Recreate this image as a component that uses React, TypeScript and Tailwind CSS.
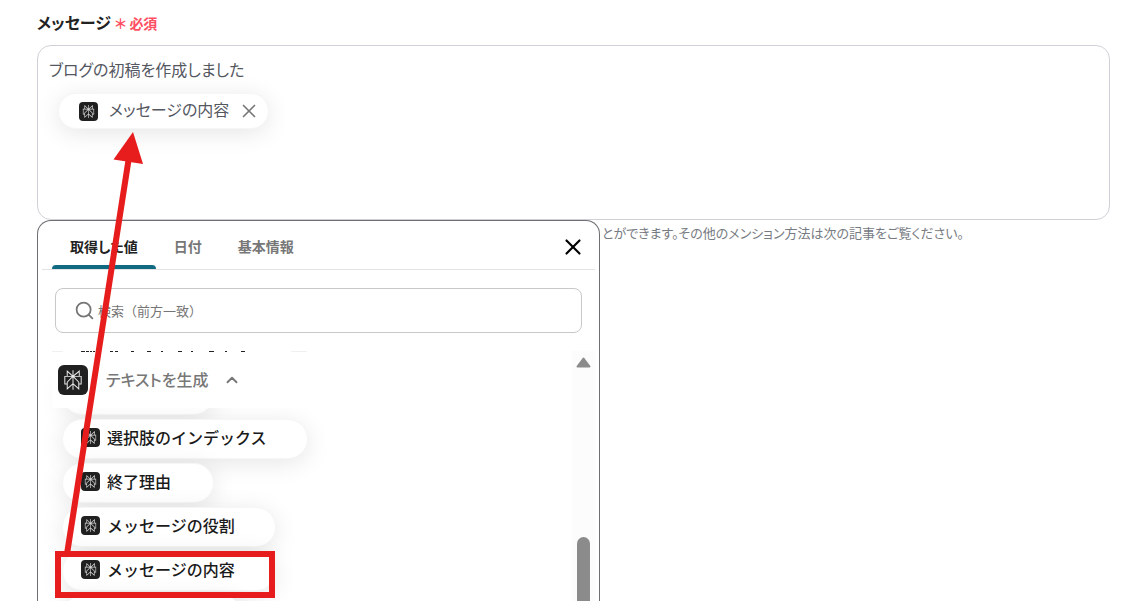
import { ChevronUp, Search, X } from "lucide-react";
import { SiPerplexity } from "react-icons/si";
import { useState } from "react";

const tabs = ["取得した値", "日付", "基本情報"];

const values = [
  { id: 1, name: "選択肢のインデックス", width: "w-[246px]" },
  { id: 2, name: "終了理由", width: "w-[152px]" },
  { id: 3, name: "メッセージの役割", width: "w-[214px]" },
  { id: 4, name: "メッセージの内容", width: "w-[214px]" },
];

const AppIcon = ({ large }: { large?: boolean }) => (
  <span
    className={
      large
        ? "flex size-[30px] shrink-0 items-center justify-center rounded-md bg-[#202020] text-[#ededed]"
        : "flex size-[19px] shrink-0 items-center justify-center rounded bg-[#202020] text-[#dedede]"
    }
  >
    <SiPerplexity size={large ? 20 : 13} aria-hidden="true" />
  </span>
);

const ValuePill = ({ value }: any) => (
  <button
    className={`${value.width} flex h-10 shrink-0 items-center gap-[7px] rounded-full border border-[#f6f6f6] bg-white pb-1 pl-[18px] text-base font-medium whitespace-nowrap text-[#1a1a1a] shadow-[0_4px_24px_rgba(0,0,0,0.1)] [font-feature-settings:normal]`}
  >
    <AppIcon />
    {value.name}
  </button>
);

const MessageField = () => (
  <div className="shrink-0">
    <div id="message-label" className="flex h-6 items-center gap-1">
      <span className="pb-[2px] text-base font-bold text-[#222]">
        メッセージ
      </span>
      <span className="flex gap-[3px] text-sm font-bold text-[#ff4d61]">
        <span>＊</span>必須
      </span>
    </div>
    <div
      role="textbox"
      aria-labelledby="message-label"
      className="mt-[10px] h-[175px] rounded-[14px] border border-[#d0d1d8] px-[11px] pt-[11px] text-base text-[#54575f]"
    >
      <p>ブログの初稿を作成しました</p>
      <span className="mt-3 ml-[9px] inline-flex h-9 items-center rounded-full border border-[#f6f6f6] bg-white pr-2 pl-5 shadow-[0_4px_24px_rgba(0,0,0,0.1)]">
        <AppIcon />
        <span className="pb-1 pl-[11px]">メッセージの内容</span>
        <button aria-label="削除" className="ml-[9px] text-[#777]">
          <X size={22} strokeWidth={1.8} />
        </button>
      </span>
    </div>
  </div>
);

const ValuePicker = () => {
  const [active, setActive] = useState(0);

  return (
    <div className="flex w-[563px] shrink-0 flex-col rounded-t-[14px] border border-b-0 border-[#6e6e73] bg-white px-1">
      <div className="flex h-[49px] shrink-0 border-b border-[#e3e3e3] pl-[10px] text-sm font-bold">
        {tabs.map((tab, index) => (
          <button
            key={tab}
            onClick={() => setActive(index)}
            className={
              index === active
                ? "relative px-[18px] pt-[2px] text-[#222] after:absolute after:inset-x-0 after:bottom-0 after:h-1 after:rounded-t after:bg-[#0f6a82]"
                : "px-[18px] pt-[2px] text-[#777]"
            }
          >
            {tab}
          </button>
        ))}
        <button aria-label="閉じる" className="mr-[9px] ml-auto pt-1 text-black">
          <X size={26} strokeWidth={2} />
        </button>
      </div>

      <label className="mx-[13px] mt-[18px] flex h-[45px] shrink-0 items-center rounded-lg border border-[#c8c8c8] pl-[18px]">
        <Search size={21} className="text-[#757575]" aria-hidden="true" />
        <input
          type="text"
          aria-label="検索"
          placeholder="検索（前方一致）"
          className="ml-[3px] flex-1 text-[13px] outline-none [font-feature-settings:normal] placeholder:text-[#757575]"
        />
      </label>

      <div className="mt-[18px] flex min-h-0 flex-1">
        <div className="flex flex-1 flex-col overflow-hidden pl-[10px]">
          {/* bottom edge of the row scrolled under the sticky header */}
          <svg
            viewBox="0 0 260 1"
            className="h-px w-[260px] shrink-0"
            aria-hidden="true"
          >
            <path d="M0 .5h11M239 .5h16" stroke="#f0f0f0" />
            <path
              d="M29 .5h4M34 .5h3M38 .5h2M41 .5h2M58 .5h3M63 .5h3M79 .5h3M95 .5h4M109 .5h2M126 .5h4M139 .5h2M157 .5h5M173 .5h2M189 .5h4"
              stroke="#222"
            />
          </svg>
          <button className="z-10 flex h-14 shrink-0 items-center bg-white pl-[6px] text-base font-medium text-[#777]">
            <AppIcon large />
            <span className="pb-[3px] pl-[18px]">テキストを生成</span>
            <ChevronUp size={18} strokeWidth={2.5} className="ml-[14px]" />
          </button>
          <div className="-mt-[33px] ml-[10px] flex flex-col gap-1">
            <div className="h-10 w-[152px] shrink-0 rounded-full border border-[#f6f6f6] bg-white shadow-[0_4px_24px_rgba(0,0,0,0.1)]" />
            {values.map((value) => (
              <ValuePill key={value.id} value={value} />
            ))}
            <div className="h-10 w-[180px] shrink-0 rounded-full border border-[#f6f6f6] bg-white shadow-[0_4px_24px_rgba(0,0,0,0.1)]" />
          </div>
        </div>
        <div className="flex w-[23px] flex-col items-center overflow-hidden bg-[#fcfcfc] pt-[6px]">
          <svg viewBox="0 0 15 11" className="h-[11px] w-[15px] shrink-0">
            <path
              d="M7.500 1.500 13.500 9.500H1.500z"
              fill="#8b8b8b"
              stroke="#8b8b8b"
              strokeWidth="2"
              strokeLinejoin="round"
            />
          </svg>
          <div className="mt-[169px] w-[13px] flex-1 rounded-t-full bg-[#8b8b8b]" />
        </div>
      </div>
    </div>
  );
};

// arrow from the picked value up to the chip it inserts
const Annotation = () => (
  <>
    <div className="pointer-events-none absolute top-[551px] left-[55px] z-20 h-[47px] w-[220px] border-[6px] border-[#e71c1c]" />
    <svg
      viewBox="0 0 100 430"
      className="pointer-events-none absolute top-[130px] left-[55px] z-20 h-[430px] w-[100px]"
      aria-hidden="true"
    >
      <path d="M12 424 74 27" stroke="#e71c1c" strokeWidth="6" />
      <path d="M78 2 58.500 29.500 88 34z" fill="#e71c1c" />
    </svg>
  </>
);

const App = () => {
  return (
    <main className="relative flex h-screen flex-col overflow-hidden bg-white pt-[11px] pr-[25px] pl-[37px] font-['Noto_Sans_CJK_JP',sans-serif] [font-feature-settings:'palt']">
      <MessageField />
      <div className="flex min-h-0 flex-1">
        <ValuePicker />
        <p className="mt-[3px] ml-[2px] text-[13px] leading-5 text-[#777b82]">
          とができます。その他のメンション方法は次の記事をご覧ください。
        </p>
      </div>
      <Annotation />
    </main>
  );
};

export default App;
